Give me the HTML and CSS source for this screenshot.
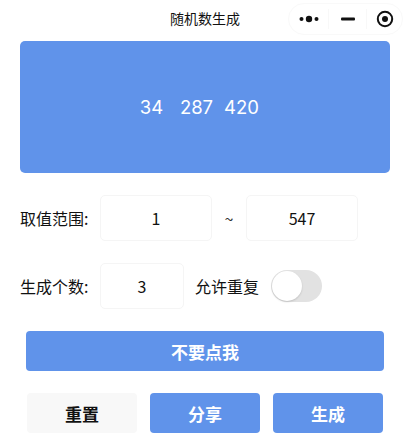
FILE: index.html
```html
<!DOCTYPE html>
<html lang="zh-CN">
<head>
    <meta charset="UTF-8">
    <meta name="viewport" content="width=device-width, initial-scale=1.0">
    <title>随机数生成</title>
    <link rel="stylesheet" href="styles.css">
</head>
<body>
    <header class="navbar">
        <span class="nav-title">随机数生成</span>
        <div class="capsule">
            <span class="capsule-item capsule-more">
                <svg width="20" height="8" viewBox="0 0 20 8"><circle cx="2.500" cy="4" r="2" fill="#111"/><circle cx="10" cy="4" r="3.200" fill="#111"/><circle cx="17.500" cy="4" r="2" fill="#111"/></svg>
            </span>
            <span class="capsule-item capsule-min">
                <svg width="14" height="4" viewBox="0 0 14 4"><rect width="14" height="3" y="0.500" rx="1" fill="#111"/></svg>
            </span>
            <span class="capsule-item capsule-close">
                <svg width="18" height="18" viewBox="0 0 18 18"><circle cx="9" cy="9" r="7.200" fill="none" stroke="#111" stroke-width="2"/><circle cx="9" cy="9" r="3" fill="#111"/></svg>
            </span>
        </div>
    </header>

    <div class="result">
        <span class="num">34</span>
        <span class="num">287</span>
        <span class="num">420</span>
    </div>

    <div class="form-row range-row">
        <span class="label">取值范围:</span>
        <div class="field field-wide">1</div>
        <span class="tilde">~</span>
        <div class="field field-wide">547</div>
    </div>

    <div class="form-row count-row">
        <span class="label">生成个数:</span>
        <div class="field field-small">3</div>
        <span class="repeat-label">允许重复</span>
        <div class="switch"><div class="switch-knob"></div></div>
    </div>

    <button class="btn btn-full">不要点我</button>

    <div class="actions">
        <button class="btn btn-gray">重置</button>
        <button class="btn">分享</button>
        <button class="btn">生成</button>
    </div>
</body>
</html>
```

FILE: styles.css
```css
* {
    box-sizing: border-box;
}

html, body {
    height: 100%;
}

body {
    margin: 0;
    overflow: hidden;
    background: #fff;
    color: #111;
    font-family: "Noto Sans CJK SC", "Open Sans", sans-serif;
    font-size: 16px;
}

.navbar {
    position: relative;
    height: 41px;
    display: flex;
    justify-content: center;
    padding: 8px 0 0 3px;
}

.nav-title {
    font-size: 14px;
    line-height: 20px;
}

.capsule {
    position: absolute;
    top: 3px;
    left: 288px;
    width: 115px;
    height: 32px;
    display: flex;
    align-items: center;
    border: 1px solid #f9f9f9;
    border-radius: 16px;
}

.capsule-item {
    height: 20px;
    display: flex;
    align-items: center;
    justify-content: center;
    border-left: 1px solid #f8f8f8;
}

.capsule-more {
    width: 39px;
    border-left: none;
}

.capsule-min {
    width: 38px;
}

.capsule-close {
    width: 36px;
}

.result {
    width: 370px;
    height: 132px;
    margin-left: 20px;
    padding-right: 17px;
    display: flex;
    justify-content: center;
    align-items: center;
    background: #6093ea;
    border-radius: 5px;
    color: #fff;
    font-family: "Inter", sans-serif;
    font-size: 18.500px;
}

.num {
    width: 45px;
    text-align: center;
}

.form-row {
    display: flex;
    align-items: center;
    padding-left: 20px;
}

.range-row {
    margin-top: 22px;
}

.count-row {
    margin-top: 22px;
}

.label {
    width: 80px;
}

.field {
    height: 46px;
    display: flex;
    align-items: center;
    justify-content: center;
    border: 1px solid #f5f5f5;
    border-radius: 5px;
}

.field-wide {
    width: 112px;
}

.field-small {
    width: 84px;
}

.tilde {
    width: 34px;
    text-align: center;
    color: #333;
}

.repeat-label {
    margin-left: 11px;
}

.switch {
    width: 51px;
    height: 32px;
    margin-left: 12px;
    padding: 1px;
    background: #e2e2e2;
    border-radius: 16px;
}

.switch-knob {
    width: 30px;
    height: 30px;
    background: #fff;
    border-radius: 50%;
    box-shadow: 0 1px 2px rgba(0, 0, 0, 0.15);
}

.btn {
    width: 110px;
    height: 40px;
    border: none;
    border-radius: 4px;
    background: #6093ea;
    color: #fff;
    font-family: inherit;
    font-size: 17px;
    font-weight: bold;
}

.btn-full {
    display: block;
    width: 358px;
    margin: 22px 0 0 26px;
}

.actions {
    display: flex;
    gap: 13px;
    margin: 22px 0 0 27px;
}

.btn-gray {
    background: #f8f8f8;
    color: #111;
}
```
